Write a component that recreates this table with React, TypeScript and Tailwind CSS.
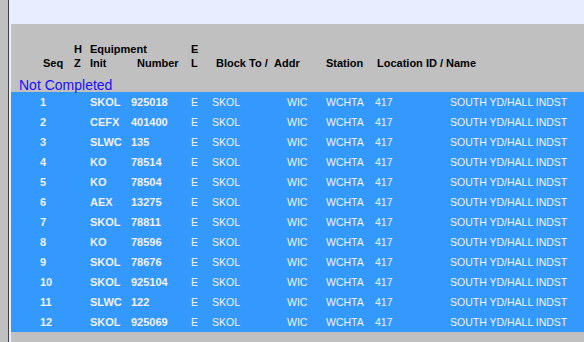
const rows = [
  { seq: 1, init: "SKOL", num: "925018" },
  { seq: 2, init: "CEFX", num: "401400" },
  { seq: 3, init: "SLWC", num: "135" },
  { seq: 4, init: "KO", num: "78514" },
  { seq: 5, init: "KO", num: "78504" },
  { seq: 6, init: "AEX", num: "13275" },
  { seq: 7, init: "SKOL", num: "78811" },
  { seq: 8, init: "KO", num: "78596" },
  { seq: 9, init: "SKOL", num: "78676" },
  { seq: 10, init: "SKOL", num: "925104" },
  { seq: 11, init: "SLWC", num: "122" },
  { seq: 12, init: "SKOL", num: "925069" },
];

function HeaderRow() {
  return (
    <div className="pt-[18px] text-[11px] font-bold leading-[14px] text-black">
      <div className="flex pl-[63px]">
        <div className="w-[16px]">H</div>
        <div className="w-[101px]">Equipment</div>
        <div>E</div>
      </div>
      <div className="flex pl-[32px]">
        <div className="w-[31px]">Seq</div>
        <div className="w-[16px]">Z</div>
        <div className="w-[47px]">Init</div>
        <div className="w-[54px]">Number</div>
        <div className="w-[25px]">L</div>
        <div className="w-[58px]">Block To /</div>
        <div className="w-[52px]">Addr</div>
        <div className="w-[51px]">Station</div>
        <div>Location ID / Name</div>
      </div>
    </div>
  );
}

function CarRow({ seq, init, num }: { seq: number; init: string; num: string }) {
  return (
    <div className="flex h-5 items-center whitespace-nowrap bg-[#3399ff] pl-[29px] pt-px text-[10.5px] text-[#f2f2ff]">
      <div className="w-[50px] text-[11px] font-bold">{seq}</div>
      <div className="w-[41px] text-[11px] font-bold">{init}</div>
      <div className="w-[60px] text-[11px] font-bold">{num}</div>
      <div className="w-[21px]">E</div>
      <div className="w-[75px]">SKOL</div>
      <div className="w-[39px]">WIC</div>
      <div className="w-[49px]">WCHTA</div>
      <div className="w-[75px]">417</div>
      <div>SOUTH YD/HALL INDST</div>
    </div>
  );
}

export default function App() {
  return (
    <div
      className="flex h-[342px] w-[584px] overflow-hidden bg-[#c0c0c0]"
      style={{ fontFamily: '"Liberation Sans", Arial, sans-serif' }}
    >
      <div className="w-2 shrink-0" />
      <div className="w-px shrink-0 bg-[#404040]" />
      <div className="flex min-w-0 flex-1 flex-col bg-[#e8eeff]">
        <div className="h-6 shrink-0" />
        <div className="ml-[2px] flex-1 bg-[#c0c0c0]">
          <HeaderRow />
          <div className="flex h-[22px] items-end pl-2 text-[14px] leading-[14px] text-[#1a0dff]">
            Not Completed
          </div>
          {rows.map((r) => (
            <CarRow key={r.seq} {...r} />
          ))}
        </div>
      </div>
    </div>
  );
}
